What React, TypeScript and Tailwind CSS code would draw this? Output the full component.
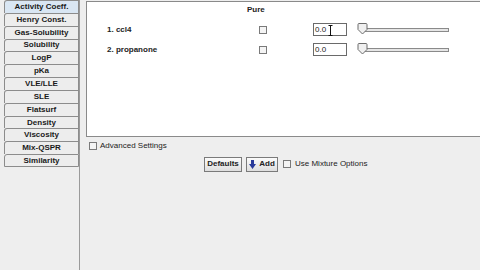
import React from "react";

const tabs = [
  "Activity Coeff.",
  "Henry Const.",
  "Gas-Solubility",
  "Solubility",
  "LogP",
  "pKa",
  "VLE/LLE",
  "SLE",
  "Flatsurf",
  "Density",
  "Viscosity",
  "Mix-QSPR",
  "Similarity",
];

function Check() {
  return <div className="w-[8px] h-[8px] border border-[#7a7a7a] bg-[#f4f4f4] shrink-0" />;
}

function Slider() {
  return (
    <div className="relative w-[93px] h-[12px] flex items-center">
      <div className="ml-[6px] w-[86px] h-[4px] border border-[#8a8a8a] bg-[#e6e6e6]" />
      <svg className="absolute left-0 -top-[1px]" width="11" height="12" viewBox="0 0 11 12">
        <path d="M1 1.5 Q1 0.5 2 0.5 H9 Q10 0.5 10 1.5 V6.5 L5.5 11 L1 6.5 Z" fill="#f0f0f0" stroke="#6d6d6d" strokeWidth="1" />
      </svg>
    </div>
  );
}

function Row({ label, cursor }: { label: string; cursor?: boolean }) {
  return (
    <div className="flex items-center h-[13px]">
      <div className="w-[172px] pl-[20px] text-[8px] font-semibold text-[#222]">{label}</div>
      <Check />
      <div className="w-[46px]" />
      <div className="relative w-[34px] h-[13px] border border-[#6a6a6a] bg-white text-[8px] leading-[11px] pl-[1px] text-[#222]">
        0.0
        {cursor && (
          <svg className="absolute left-[14px] top-[1px]" width="5" height="11" viewBox="0 0 5 11">
            <path d="M0.5 0.5 H4.5 M2.5 0.5 V10.5 M0.5 10.5 H4.5" stroke="#111" strokeWidth="1" fill="none" />
          </svg>
        )}
      </div>
      <div className="w-[10px]" />
      <Slider />
    </div>
  );
}

export default function App() {
  return (
    <div
      className="w-[480px] h-[270px] bg-[#eeeeee] flex overflow-hidden"
      style={{ fontFamily: '"Liberation Sans", Arial, sans-serif' }}
    >
      <div className="w-[80px] shrink-0 h-full border-r border-[#9a9a9a] pl-[4px] flex flex-col pt-0">
        {tabs.map((t, i) => (
          <div
            key={t}
            className={
              "w-[75px] h-[12.85px] border border-[#8c8c8c] border-b-0 last:border-b rounded-tl-[3px] flex items-center justify-center text-[8px] font-bold text-[#1a1a1a] leading-none " +
              (i === 0 ? "bg-[#d9e6f3]" : "bg-[#ededed]")
            }
          >
            {t}
          </div>
        ))}
      </div>
      <div className="w-[400px] shrink-0 flex flex-col pl-[6px]">
        <div className="w-[400px] h-[136px] bg-white border-l border-t border-b border-[#8a8a8a] mt-[1px] flex flex-col">
          <div className="h-[14px] flex items-end">
            <div className="w-[172px]" />
            <div className="text-[8px] font-semibold text-[#222] -ml-[12px]">Pure</div>
          </div>
          <div className="h-[7px]" />
          <Row label="1. ccl4" cursor />
          <div className="h-[7px]" />
          <Row label="2. propanone" />
        </div>
        <div className="flex items-center mt-[4px] ml-[3px] h-[10px]">
          <Check />
          <div className="ml-[3px] text-[8px] text-[#222]">Advanced Settings</div>
        </div>
        <div className="flex items-center mt-[5px] ml-[118px] h-[16px]">
          <div className="w-[38px] h-[15px] border border-[#7a7a7a] bg-gradient-to-b from-[#fbfbfb] to-[#dedede] flex items-center justify-center text-[8px] font-bold text-[#222]">
            Defaults
          </div>
          <div className="ml-[4px] w-[32px] h-[15px] border border-[#7a7a7a] bg-gradient-to-b from-[#fbfbfb] to-[#dedede] flex items-center justify-center gap-[3px] text-[8px] font-bold text-[#222]">
            <svg width="7" height="9" viewBox="0 0 7 9">
              <path d="M2 0 H5 V4 H7 L3.5 9 L0 4 H2 Z" fill="#2a3a9a" />
            </svg>
            Add
          </div>
          <div className="ml-[5px]"><Check /></div>
          <div className="ml-[4px] text-[8px] text-[#222]">Use Mixture Options</div>
        </div>
      </div>
    </div>
  );
}
